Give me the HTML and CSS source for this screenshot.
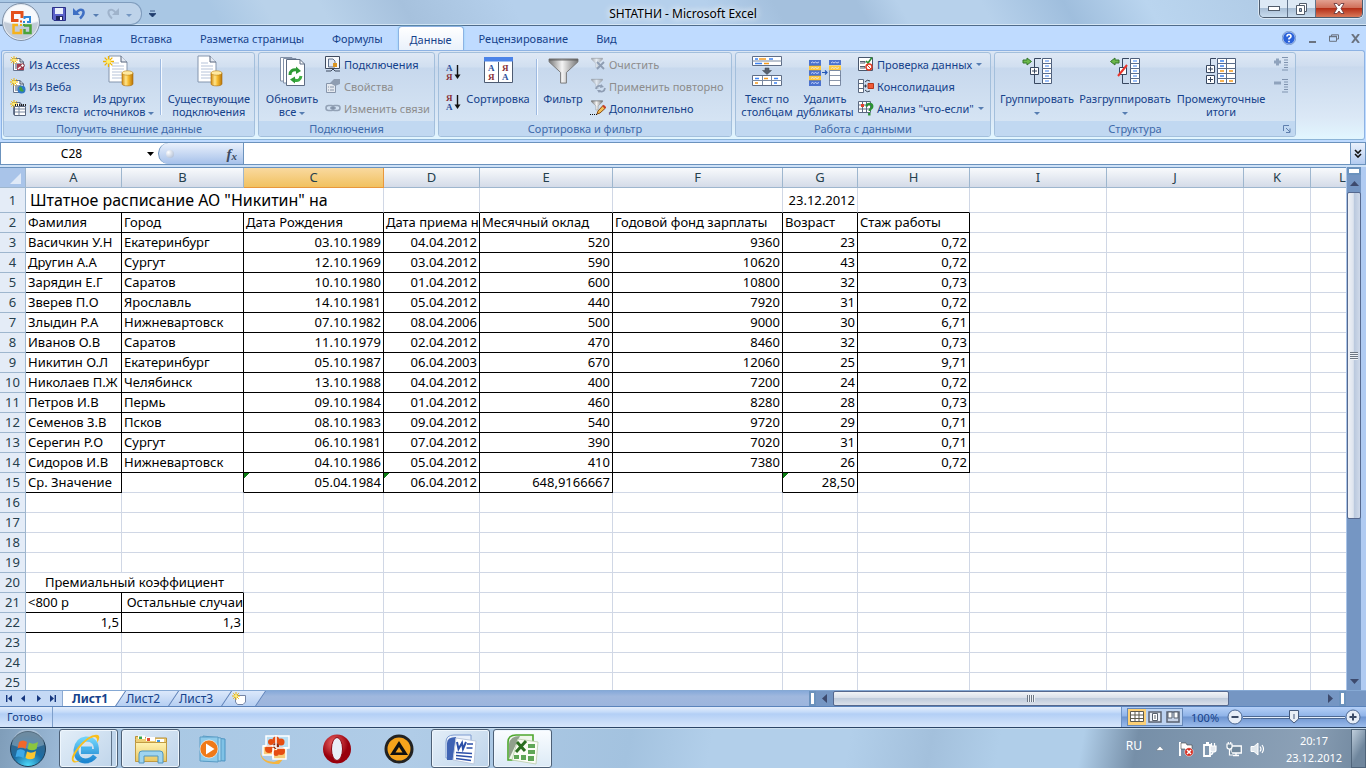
FILE: index.html
```html
<!DOCTYPE html>
<html lang="ru">
<head>
<meta charset="utf-8">
<title>SHTATНИ - Microsoft Excel</title>
<link rel="stylesheet" href="styles.css">
</head>
<body>
<svg class="defs" width="0" height="0" aria-hidden="true">
<defs>
<linearGradient id="gold"><stop offset="0" stop-color="#d28a10"/><stop offset=".35" stop-color="#ffe58a"/><stop offset=".6" stop-color="#f5b92e"/><stop offset="1" stop-color="#b87408"/></linearGradient>
<linearGradient id="metal"><stop offset="0" stop-color="#777"/><stop offset=".45" stop-color="#f4f4f4"/><stop offset="1" stop-color="#777"/></linearGradient>
<radialGradient id="orb" cx=".5" cy="1" r=".9"><stop offset="0" stop-color="#4fe0ff"/><stop offset=".5" stop-color="#1b6da5"/><stop offset="1" stop-color="#3c6482"/></radialGradient>
<radialGradient id="red" cx=".4" cy=".3"><stop offset="0" stop-color="#f26a6a"/><stop offset="1" stop-color="#99000c"/></radialGradient>
<linearGradient id="ie" x2="0" y2="1"><stop offset="0" stop-color="#6fd3fa"/><stop offset="1" stop-color="#1d86d0"/></linearGradient>
<linearGradient id="folder" x2="0" y2="1"><stop offset="0" stop-color="#fff3b4"/><stop offset="1" stop-color="#e9c761"/></linearGradient>
<symbol id="star" viewBox="0 0 10 10"><path d="M5 0V10M0 5H10M1.5 1.5L8.5 8.5M8.5 1.5L1.5 8.5" stroke="#f0b400" stroke-width="1.2"/><circle cx="5" cy="5" r="2" fill="#ffee70"/></symbol>
<symbol id="sheet" viewBox="0 0 26 32"><path d="M1 1H13L19 7V27H1Z" fill="#fff" stroke="#8495ad"/><path d="M13 1V7H19" fill="#e4eaf3" stroke="#56647d"/><path d="M4 8H11M4 11H16M4 14H16M4 17H14M4 20H14M4 23H14" stroke="#b6c3d9"/><path d="M14 18V29C14 31.500 25 31.500 25 29V18Z" fill="url(#gold)" stroke="#a96d10" stroke-width=".6"/><ellipse cx="19.500" cy="18" rx="5.500" ry="2.200" fill="#ffe9a0" stroke="#bb8213" stroke-width=".6"/></symbol>
<symbol id="page" viewBox="0 0 16 16"><path d="M3.500 2.500H10L13.500 6V14.500H3.500Z" fill="#fff" stroke="#66758f"/><path d="M10 2.500V6H13.500M5 8H11M5 10H11M5 12H9" fill="none" stroke="#3c4b63"/><use href="#star" x="0" y="0" width="8" height="8"/></symbol>
<symbol id="funnel" viewBox="0 0 32 28"><path d="M1 1H31V4L19 15V26H13V15L1 4Z" fill="url(#metal)" stroke="#777"/><path d="M1 2H31" stroke="#555"/></symbol>
<symbol id="rows" viewBox="0 0 10 26"><path d="M.5.500H9.500V25.500H.5Z" fill="#fff" stroke="#4e5f7b"/><path d="M0 5.500H10M0 10.500H10M0 15.500H10M0 20.500H10" stroke="#5b6d8b"/><path d="M3 3H7M3 8H7M3 13H7M3 18H7M3 23H7" stroke="#3e83f1" stroke-width="1.200"/></symbol>
<symbol id="arrow" viewBox="0 0 10 8"><path d="M1 2.500H5V.5L9.500 4L5 7.500V5.500H1Z" fill="#6bb84a" stroke="#34762a"/></symbol>
</defs>
</svg>

<header class="titlebar">
  <div class="qat">
    <button aria-label="Сохранить"><svg width="14" height="14"><path d="M.5.500H13.500V13.500H2L.5 12Z" fill="#5b62c9" stroke="#2b3187"/><path d="M3 1H11V7H3Z" fill="#e9effb"/><path d="M4 9H11V13H4Z" fill="#20275c"/><path d="M8 10H10V13H8Z" fill="#fff"/></svg></button>
    <button aria-label="Отменить"><svg width="13" height="13"><path d="M3 6Q7 1 10 3.500Q12 7 7 11.500" fill="none" stroke="#3e6fc4" stroke-width="2.500"/><path d="M0 1V8H7Z" fill="#3e6fc4"/></svg></button>
    <button aria-label="Список отмены"><i class="caret"></i></button>
    <button class="dim" aria-label="Вернуть"><svg width="13" height="13"><path d="M10 6Q6 1 3 3.500Q1 7 6 11.500" fill="none" stroke="#93a6bf" stroke-width="2"/><path d="M13 1V8H6Z" fill="#93a6bf"/></svg></button>
    <button class="dim" aria-label="Список возврата"><i class="caret"></i></button>
  </div>
  <button class="customize" aria-label="Настройка панели"><svg width="7" height="8"><path d="M1 1H6M0 3.500H7L3.500 7Z" fill="#1f3c6c" stroke="#1f3c6c" stroke-width=".8"/></svg></button>
  <h1>SHTATНИ - Microsoft Excel</h1>
  <div class="winbtns">
    <button aria-label="Свернуть"><svg width="12" height="5"><rect x=".5" y=".5" width="11" height="4" fill="#fff" stroke="#515c6b"/></svg></button>
    <button aria-label="Развернуть"><svg width="13" height="12"><path d="M4.500.500H11.500V8.500H4.500Z" fill="#fff" stroke="#515c6b"/><path d="M1.500 2.500H9.500V11.500H1.500Z" fill="#fff" stroke="#515c6b"/><path d="M4.500 5.500H6.500V8.500H4.500Z" fill="#9fb3cb" stroke="#515c6b"/></svg></button>
    <button class="close" aria-label="Закрыть"><svg width="12" height="11"><path d="M1 .5H4L6 3L8 .5H11L8 5.500L11 10.500H8L6 8L4 10.500H1L4 5.500Z" fill="#fff" stroke="#5e2f35" stroke-width=".8"/></svg></button>
  </div>
</header>
<button class="office" aria-label="Office"><svg width="40" height="40" viewBox="0 0 40 40"><circle cx="20" cy="20" r="18.500" fill="#e5ebf3" stroke="#7f90a6"/><path d="M3 20A17 17 0 0 0 37 20Q20 26 3 20" fill="#c3ccd8"/><path d="M3 19A17 16 0 0 1 37 19Q20 24 3 19" fill="#f7f9fc"/><g fill="none"><path d="M17.500 18.500H11.500V10.500H21V16" stroke="#e4501b" stroke-width="3"/><path d="M23.500 17V15H29V20H26" stroke="#2f87d8" stroke-width="2"/><path d="M17 23H12.500V31H20V27" stroke="#f6b21b" stroke-width="2.500"/><path d="M23 23.500H29.500V31H23.500V27" stroke="#4ba339" stroke-width="2.500"/></g><path d="M19 18.500H21V20.500H19Z" fill="#e4501b"/><path d="M22 19H24V21H22Z" fill="#2f87d8"/><path d="M19 22H21V24H19Z" fill="#f6b21b"/><path d="M22 22H24V24H22Z" fill="#4ba339"/></svg></button>

<nav class="tabs">
  <a href="#">Главная</a><a href="#">Вставка</a><a href="#">Разметка страницы</a><a href="#">Формулы</a><a href="#" class="on">Данные</a><a href="#">Рецензирование</a><a href="#">Вид</a>
  <div class="docbtns">
    <button aria-label="Справка"><svg width="14" height="14"><circle cx="7" cy="7" r="6.300" fill="#2b62d9" stroke="#c6dcfa"/><circle cx="7" cy="7" r="6.800" fill="none" stroke="#4a6aa5" stroke-width=".5"/><path d="M5 5.500Q5 3.500 7 3.500T9 5.500Q9 6.500 7 7.500V8.500M7 9.700V11.200" fill="none" stroke="#fff" stroke-width="1.600"/></svg></button>
    <button aria-label="Свернуть окно"><svg width="9" height="10"><path d="M1 9H8" stroke="#6b7380" stroke-width="2"/></svg></button>
    <button aria-label="Восстановить окно"><svg width="10" height="8"><path d="M2.500 2V.8H9.500V5H8M.5 2.500H7.500V7.300H.5Z" fill="none" stroke="#6b7380"/><path d="M0 2.500H8" stroke="#6b7380" stroke-width="1.500"/></svg></button>
    <button aria-label="Закрыть окно"><svg width="9" height="9"><path d="M1 0L8 9M8 0L1 9" stroke="#6b7380" stroke-width="2"/></svg></button>
  </div>
</nav>

<section class="ribbon">
  <div class="group g1">
    <div class="tools">
      <div class="stack">
        <button><svg width="16" height="16"><use href="#page"/><path d="M7 8H14V14H7Z" fill="#a83a4c"/><path d="M8 13L13 9" stroke="#fff" stroke-width="1.500"/><circle cx="12.500" cy="9.500" r="1.800" fill="#fff" stroke="#7c2030"/></svg>Из Access</button>
        <button><svg width="16" height="16"><use href="#page"/><circle cx="11.500" cy="11.500" r="4" fill="#2f78c8"/><path d="M9 10Q11 7 12 10T14 13Q10 15 9 10" fill="#3ea33a"/></svg>Из Веба</button>
        <button><svg width="16" height="16"><use href="#page"/><path d="M4.500 6.500H15.500V15.500H4.500Z" fill="#fff" stroke="#59677f"/><path d="M5 5H16" stroke="#222" stroke-dasharray="1 1" stroke-width="2"/><path d="M5 9H15M5 12H15M9 6V15" stroke="#7888a0"/></svg>Из текста</button>
      </div>
      <button class="big w78"><svg width="32" height="32"><use href="#sheet" x="5" y="0" width="26" height="32"/><use href="#star" x="0" y="1" width="11" height="11"/></svg><span>Из других<br>источников <i class="caret"></i></span></button>
      <hr>
      <button class="big w90"><svg width="32" height="32"><use href="#sheet" x="4" y="0" width="26" height="32"/></svg><span>Существующие<br>подключения</span></button>
    </div>
    <h2>Получить внешние данные</h2>
  </div>
  <div class="group g2">
    <div class="tools">
      <button class="big w62"><svg width="32" height="32"><path d="M4.500 2.500H16V26H4.500Z" fill="#fff" stroke="#8291a8"/><path d="M7.500 3.500H20V28H7.500Z" fill="#fff" stroke="#8291a8"/><path d="M10.500 4.500H24L28.500 9V30.500H10.500Z" fill="#fff" stroke="#5e6c83"/><path d="M24 4.500V9H28.500" fill="none" stroke="#5e6c83"/><path d="M14 20Q14 14 21 15" fill="none" stroke="#2e9b35" stroke-width="3"/><path d="M20 11.500L25 16L20 19Z" fill="#2e9b35"/><path d="M25 21Q24 27 18 25" fill="none" stroke="#3cad40" stroke-width="3"/><path d="M19 28.500L14 24.500L19 21.500Z" fill="#2e9b35"/></svg><span>Обновить<br>все <i class="caret"></i></span></button>
      <div class="stack snug">
        <button><svg width="16" height="16"><path d="M.5.500H14.500V12.500H.5Z" fill="#f7f9fc" stroke="#3e4a5e"/><path d="M3.500 3H8L10 5V11H3.500Z" fill="#dfe8f5" stroke="#5f6f89"/><path d="M8 7H12V11H8Z" fill="#d99522"/><path d="M1 15H6L8 13L10 15H15" fill="none" stroke="#3e4a5e"/></svg>Подключения</button>
        <button disabled><svg width="16" height="16"><path d="M1.500 5.500H10.500V14.500H1.500Z" fill="#e5e9ef" stroke="#8795aa"/><path d="M3 9H4M5 9H9M3 12H4M5 12H9" stroke="#8795aa"/><path d="M5 5L9 1H15V6L10 8Z" fill="#8f9db1"/></svg>Свойства</button>
        <button disabled><svg width="16" height="16"><rect x="1" y="5.500" width="8" height="5" rx="2.500" fill="none" stroke="#93a2b6" stroke-width="1.600"/><rect x="7" y="5.500" width="8" height="5" rx="2.500" fill="none" stroke="#93a2b6" stroke-width="1.600"/><path d="M5 8H11" stroke="#6f7f96"/></svg>Изменить связи</button>
      </div>
    </div>
    <h2>Подключения</h2>
  </div>
  <div class="group g3">
    <div class="tools">
      <div class="sorts">
        <button aria-label="От А до Я"><svg width="16" height="18"><text x="1" y="8" class="ltr blue">А</text><text x="1" y="17" class="ltr brown">Я</text><path d="M12.500 2V12" stroke="#111" stroke-width="1.400"/><path d="M9.500 11.500H15.500L12.500 16Z" fill="#111"/></svg></button>
        <button aria-label="От Я до А"><svg width="16" height="18"><text x="1" y="8" class="ltr brown">Я</text><text x="1" y="17" class="ltr blue">А</text><path d="M12.500 2V12" stroke="#111" stroke-width="1.400"/><path d="M9.500 11.500H15.500L12.500 16Z" fill="#111"/></svg></button>
      </div>
      <button class="big w72"><svg width="32" height="32"><path d="M2.500 2.500H30.500V27.500H2.500Z" fill="#fff" stroke="#4d5b72"/><path d="M2 2H31V6.500H2Z" fill="#4b83e8"/><path d="M16.500 7V27" stroke="#4d5b72"/><text x="6" y="16" class="ltr blue">А</text><text x="6" y="25" class="ltr brown">Я</text><text x="20" y="16" class="ltr brown">Я</text><text x="20" y="25" class="ltr blue">А</text></svg><span>Сортировка</span></button>
      <hr>
      <button class="big w46"><svg width="32" height="32"><use href="#funnel" x="1" y="3" width="31" height="27"/></svg><span>Фильтр</span></button>
      <div class="stack">
        <button disabled><svg width="16" height="16"><g opacity=".55"><use href="#funnel" x="1" y="1" width="12" height="12"/></g><path d="M7 6L14 13M14 6L7 13" stroke="#8e9db3" stroke-width="1.800"/></svg>Очистить</button>
        <button disabled><svg width="16" height="16"><g opacity=".55"><use href="#funnel" x="1" y="0" width="12" height="12"/></g><path d="M6 11Q7 7 11 8M15 10Q14 15 9 13" fill="none" stroke="#8e9db3" stroke-width="1.800"/><path d="M11 6L14 9L10 10ZM9 15L7 12L11 12Z" fill="#8e9db3"/></svg>Применить повторно</button>
        <button><svg width="16" height="16"><use href="#funnel" x="1" y="0" width="12" height="11"/><path d="M0 14.500H7" stroke="#111" stroke-dasharray="1 1"/><path d="M7 14L8 11L13 5.500L15.500 8L10 13Z" fill="#f4bd54" stroke="#8a4e12"/><path d="M13 5.500L15.500 8" stroke="#c7402b" stroke-width="2"/></svg>Дополнительно</button>
      </div>
    </div>
    <h2>Сортировка и фильтр</h2>
  </div>
  <div class="group g4">
    <div class="tools">
      <button class="big w58"><svg width="32" height="32"><path d="M1.500 1.500H30.500V10.500H1.500ZM1.500 20.500H30.500V30.500H1.500Z" fill="#fff" stroke="#5e6d86"/><path d="M1 6H31M1 25.500H31M11.500 21V30M20.500 21V30" stroke="#7988a0"/><path d="M4 4H7M18 4H22M4 8.500H11M4 23.500H8M23 23.500H27M23 28H26" stroke="#3e83f1" stroke-width="1.300"/><path d="M8 4H15M13 8.500H18M13 23.500H17M4 28H7" stroke="#f39a1f" stroke-width="1.300"/><path d="M14 13H18V15.500H20.500L16 19.500L11.500 15.500H14Z" fill="#59616d" stroke="#3f4650" stroke-width=".5"/></svg><span>Текст по<br>столбцам</span></button>
      <button class="big w58"><svg width="34" height="32"><path d="M1 5H13V31H1ZM21 5H33V10H21Z" fill="#4c72cf"/><path d="M1 10.500H13V15.500H1ZM1 20.500H13V25.500H1ZM21 10.500H33V15.500H21Z" fill="#ffc83d"/><path d="M21.500 15.500H32.500V30.500H21.500Z" fill="#fff" stroke="#7b8aa3"/><path d="M21 20.500H33M21 25.500H33M1 10.500H13M1 15.500H13M1 20.500H13M1 25.500H13" stroke="#6d7c96" stroke-width=".8"/><path d="M3 8L4.500 7L6 8L7.500 7L9 8L11 7M3 13.500L4.500 12.500L6 13.500L7.500 12.500L9 13.500L11 12.500M3 18.500L4.500 17.500L6 18.500L7.500 17.500L9 18.500L11 17.500M3 23.500L4.500 22.500L6 23.500L7.500 22.500L9 23.500L11 22.500M3 28.500L4.500 27.500L6 28.500L7.500 27.500L9 28.500L11 27.500M23 8L24.500 7L26 8L27.500 7L29 8L31 7M23 13.500L24.500 12.500L26 13.500L27.500 12.500L29 13.500L31 12.500" fill="none" stroke="#e4ecff" stroke-width=".8"/><path d="M14 17.500H19M17 15.500L19 17.500L17 19.500" fill="none" stroke="#2458b8" stroke-width="1.200"/></svg><span>Удалить<br>дубликаты</span></button>
      <div class="stack">
        <button><svg width="16" height="16"><path d="M.5 1.500H14.500V14.500H.5Z" fill="#fff" stroke="#48566c"/><path d="M2 5.500H7V7H2M2 10.500H7V12H2" fill="none" stroke="#555f70"/><path d="M8 5L10 7L14 1.500" fill="none" stroke="#2c8d33" stroke-width="1.600"/><circle cx="11" cy="11" r="3" fill="#fff" stroke="#dd3b24" stroke-width="1.400"/><path d="M9 9L13 13" stroke="#dd3b24"/></svg>Проверка данных<i class="caret"></i></button>
        <button><svg width="16" height="16"><path d="M.5 1.500H5.500V14.500H.5ZM.5 5.500H5.500M.5 10.500H5.500" fill="#fff" stroke="#5b6980"/><path d="M7 4Q9 1 12 3M7 12Q9 15 12 13M6 8H9M7.500 6.500V9.500" fill="none" stroke="#333e50"/><path d="M10 5.500H15.500V10.500H10Z" fill="#ef5a36" stroke="#b4381c"/></svg>Консолидация</button>
        <button><svg width="16" height="16"><path d="M.5 1.500H12.500V12.500H.5Z" fill="#fff" stroke="#5b6980"/><path d="M.5 5H12.500M.5 9H12.500M4.500 1.500V12.500M8.500 1.500V12.500" stroke="#5b6980"/><path d="M3 4H6V7H3Z" fill="#e3402c"/><path d="M8.500 6.500Q9 3.500 12 4T14 7.500Q12 9 11.500 11M11.300 13V15.500" fill="none" stroke="#2a9132" stroke-width="2.400"/></svg>Анализ "что-если"<i class="caret"></i></button>
      </div>
    </div>
    <h2>Работа с данными</h2>
  </div>
  <div class="group g5">
    <div class="tools">
      <button class="big w80"><svg width="32" height="32"><use href="#rows" x="21" y="3" width="10" height="26"/><path d="M20 3.500H13.500V28.500H20" fill="none" stroke="#37465f"/><path d="M9.500 12.500H17.500V19.500H9.500Z" fill="#fff" stroke="#37465f"/><path d="M11 16H16M13.500 13.500V18.500" stroke="#37465f"/><use href="#arrow" x="1" y="2" width="10" height="9"/></svg><span>Группировать<br><i class="caret"></i></span></button>
      <button class="big w96"><svg width="32" height="32"><use href="#rows" x="21" y="3" width="10" height="26"/><path d="M20 3.500H13.500V28.500H20" fill="none" stroke="#37465f"/><path d="M10.500 12.500H17.500V19.500H10.500Z" fill="#fff" stroke="#37465f"/><path d="M9 21L18 10" stroke="#e8342b" stroke-width="2"/><g transform="translate(12 0) scale(-1 1)"><use href="#arrow" x="1" y="2" width="10" height="9"/></g></svg><span>Разгруппировать<br><i class="caret"></i></span></button>
      <button class="big w96"><svg width="32" height="32"><path d="M12.500 3.500H30.500V28.500H12.500Z" fill="#fff" stroke="#4e5f7b"/><path d="M21.500 4V28M12 8.500H31M12 13.500H31M12 18.500H31M12 23.500H31" stroke="#5b6d8b"/><path d="M15 6H19M15 11H19M15 21H19" stroke="#3e83f1" stroke-width="1.300"/><path d="M15 16H19M15 26H19M24 16H28M24 26H28" stroke="#f39a1f" stroke-width="1.300"/><path d="M11 3.500H5.500V10" fill="none" stroke="#37465f"/><path d="M1.500 10.500H9.500V17.500H1.500ZM1.500 20.500H9.500V28.500H1.500Z" fill="#fff" stroke="#37465f"/><path d="M3 14H8M5.500 11.500V16.500M3 24.500H8M5.500 22V27" stroke="#37465f"/></svg><span>Промежуточные<br>итоги</span></button>
      <div class="outline">
        <button disabled aria-label="Показать детали"><svg width="16" height="16"><path d="M1 6H8M4.500 2.500V9.500" stroke="#8fa3bd" stroke-width="3"/><path d="M9 1.500H15M11 4H15M11 6.500H15M11 9H15M11 11.500H15M9 14H15" stroke="#7f93af"/></svg></button>
        <button disabled aria-label="Скрыть детали"><svg width="16" height="16"><path d="M1 5H8" stroke="#8fa3bd" stroke-width="3"/><path d="M9 1.500H15M11 4H15M11 6.500H15M11 9H15M11 11.500H15M9 14H15" stroke="#7f93af"/></svg></button>
      </div>
    </div>
    <h2 class="wide">Структура<button class="launch" aria-label="Параметры структуры"><svg width="8" height="8"><path d="M.5 6V.5H6M3 3L7 7M7 3.500V7.500H3" fill="none" stroke="#5f7fae"/></svg></button></h2>
  </div>
</section>

<div class="formula">
  <input class="namebox" aria-label="Имя" value="C28">
  <button class="drop" aria-label="Список имён"><svg width="7" height="4"><path d="M0 0H7L3.500 4Z"/></svg></button>
  <div class="fx"><i class="dot"></i><button aria-label="Вставить функцию"><i>f</i><sub>x</sub></button></div>
  <input class="expr" aria-label="Строка формул">
  <button class="expand" aria-label="Развернуть строку формул"><svg width="8" height="9"><path d="M1 1L4 4L7 1M1 5L4 8L7 5" fill="none" stroke="#111" stroke-width="1.600"/></svg></button>
</div>

<main class="book">
<div class="grid">
<table>
<colgroup><col class="c0"><col class="ca"><col class="cb"><col class="cc"><col class="cd"><col class="ce"><col class="cf"><col class="cg"><col class="ch"><col class="ci"><col class="cj"><col class="ck"><col class="cl"></colgroup>
<thead><tr><th class="corner"><svg width="12" height="12"><path d="M11 0V11H0Z" fill="#dfe9f7"/></svg></th><th>A<th>B<th class="sel">C<th>D<th>E<th>F<th>G<th>H<th>I<th>J<th>K<th>L</tr></thead>
<tbody>
<tr class="r1"><th>1<td colspan="3" class="u title">Штатное расписание АО "Никитин" на<td class="u"><td class="u"><td class="u"><td class="u n">23.12.2012<td class="u"><td><td><td><td></tr>
<tr class="box txt"><th>2<td>Фамилия<td>Город<td>Дата Рождения<td>Дата приема н<td>Месячный оклад<td>Годовой фонд зарплаты<td>Возраст<td>Стаж работы<td><td><td><td></tr>
<tr class="box"><th>3<td>Васичкин У.Н<td>Екатеринбург<td>03.10.1989<td>04.04.2012<td>520<td>9360<td>23<td>0,72<td><td><td><td></tr>
<tr class="box"><th>4<td>Другин А.А<td>Сургут<td>12.10.1969<td>03.04.2012<td>590<td>10620<td>43<td>0,72<td><td><td><td></tr>
<tr class="box"><th>5<td>Зарядин Е.Г<td>Саратов<td>10.10.1980<td>01.04.2012<td>600<td>10800<td>32<td>0,73<td><td><td><td></tr>
<tr class="box"><th>6<td>Зверев П.О<td>Ярославль<td>14.10.1981<td>05.04.2012<td>440<td>7920<td>31<td>0,72<td><td><td><td></tr>
<tr class="box"><th>7<td>Злыдин Р.А<td>Нижневартовск<td>07.10.1982<td>08.04.2006<td>500<td>9000<td>30<td>6,71<td><td><td><td></tr>
<tr class="box"><th>8<td>Иванов О.В<td>Саратов<td>11.10.1979<td>02.04.2012<td>470<td>8460<td>32<td>0,73<td><td><td><td></tr>
<tr class="box"><th>9<td>Никитин О.Л<td>Екатеринбург<td>05.10.1987<td>06.04.2003<td>670<td>12060<td>25<td>9,71<td><td><td><td></tr>
<tr class="box"><th>10<td>Николаев П.Ж<td>Челябинск<td>13.10.1988<td>04.04.2012<td>400<td>7200<td>24<td>0,72<td><td><td><td></tr>
<tr class="box"><th>11<td>Петров И.В<td>Пермь<td>09.10.1984<td>01.04.2012<td>460<td>8280<td>28<td>0,73<td><td><td><td></tr>
<tr class="box"><th>12<td>Семенов З.В<td>Псков<td>08.10.1983<td>09.04.2012<td>540<td>9720<td>29<td>0,71<td><td><td><td></tr>
<tr class="box"><th>13<td>Серегин Р.О<td>Сургут<td>06.10.1981<td>07.04.2012<td>390<td>7020<td>31<td>0,71<td><td><td><td></tr>
<tr class="box"><th>14<td>Сидоров И.В<td>Нижневартовск<td>04.10.1986<td>05.04.2012<td>410<td>7380<td>26<td>0,72<td><td><td><td></tr>
<tr><th>15<td class="u r">Ср. Значение<td class="r"><td class="u r n flag">05.04.1984<td class="u r n flag">06.04.2012<td class="u r n">648,9166667<td class="r"><td class="u r n flag">28,50<td><td><td><td><td></tr>
<tr><th>16<td><td><td><td><td><td><td><td><td><td><td><td></tr>
<tr><th>17<td><td><td><td><td><td><td><td><td><td><td><td></tr>
<tr><th>18<td><td><td><td><td><td><td><td><td><td><td><td></tr>
<tr><th>19<td><td><td><td><td><td><td><td><td><td><td><td></tr>
<tr><th>20<td colspan="2" class="u mid">Премиальный коэффициент<td><td><td><td><td><td><td><td><td><td></tr>
<tr><th>21<td class="u r">&lt;800 р<td class="u r n tight">Остальные случаи<td><td><td><td><td><td><td><td><td><td></tr>
<tr><th>22<td class="u r n">1,5<td class="u r n">1,3<td><td><td><td><td><td><td><td><td><td></tr>
<tr><th>23<td><td><td><td><td><td><td><td><td><td><td><td></tr>
<tr><th>24<td><td><td><td><td><td><td><td><td><td><td><td></tr>
<tr><th>25<td><td><td><td><td><td><td><td><td><td><td><td></tr>
</tbody>
</table>
</div>
<div class="vscroll">
  <i class="split"></i>
  <button aria-label="Вверх"><svg width="9" height="5"><path d="M0 5H9L4.500 0Z" fill="#3d4a6d"/></svg></button>
  <div class="track"><div class="thumb"><i></i></div></div>
  <button aria-label="Вниз"><svg width="9" height="5"><path d="M0 0H9L4.500 5Z" fill="#3d4a6d"/></svg></button>
</div>
</main>

<div class="sheets">
  <div class="navs">
    <button aria-label="Первый лист"><svg width="7" height="7"><path d="M.7 0V7" stroke="#16367e" stroke-width="1.400"/><path d="M6 0V7L2 3.500Z" fill="#16367e"/></svg></button>
    <button aria-label="Предыдущий лист"><svg width="7" height="7"><path d="M5 0V7L1 3.500Z" fill="#16367e"/></svg></button>
    <button aria-label="Следующий лист"><svg width="7" height="7"><path d="M2 0V7L6 3.500Z" fill="#16367e"/></svg></button>
    <button aria-label="Последний лист"><svg width="7" height="7"><path d="M6.300 0V7" stroke="#16367e" stroke-width="1.400"/><path d="M1 0V7L5 3.500Z" fill="#16367e"/></svg></button>
  </div>
  <div class="leafs">
    <a href="#" class="leaf on"><span>Лист1</span></a><a href="#" class="leaf"><span>Лист2</span></a><a href="#" class="leaf"><span>Лист3</span></a><a href="#" class="leaf add" aria-label="Вставить лист"><span><svg width="15" height="13"><path d="M3.500 3.500H13.500V10L11 12.500H5.500L3.500 10Z" fill="#fff" stroke="#7585a6"/><use href="#star" x="0" y="0" width="8" height="8"/></svg></span></a>
  </div>
  <div class="hscroll">
    <i class="split"></i>
    <button aria-label="Влево"><svg width="5" height="9"><path d="M5 0V9L0 4.500Z" fill="#3d4a6d"/></svg></button>
    <div class="track"><div class="thumb"><i></i></div></div>
    <button aria-label="Вправо"><svg width="5" height="9"><path d="M0 0V9L5 4.500Z" fill="#3d4a6d"/></svg></button>
    <i class="split"></i>
  </div>
</div>

<footer class="status">
  <span class="ready">Готово</span>
  <div class="zoom">
    <div class="views">
      <button class="on" aria-label="Обычный"><svg width="14" height="12"><path d="M.5.500H13.500V10.500H.5ZM.5 4H13.500M.5 7.500H13.500M5 .5V10.500M9 .5V10.500" fill="#fff" stroke="#5d5a4d"/></svg></button>
      <button aria-label="Разметка"><svg width="14" height="12"><path d="M1 1H13V11H1Z" fill="#e9eef6" stroke="#596270" stroke-width="1.500"/><path d="M4.500 2.500H9.500V9.500H4.500Z" fill="#fff" stroke="#596270"/><path d="M6 5H8M6 7H8" stroke="#596270"/></svg></button>
      <button aria-label="Страничный"><svg width="14" height="12"><path d="M1 1H13V11H1Z" fill="#c7d3e6" stroke="#596270" stroke-width="1.500"/><path d="M2 1H6V7H2ZM8 1H12V7H8Z" fill="#fff" stroke="#596270"/></svg></button>
    </div>
    <span>100%</span>
    <button class="round" aria-label="Уменьшить"><svg width="16" height="16"><circle cx="8" cy="8" r="7" fill="#e6edf7" stroke="#4c6893"/><path d="M4.500 8H11.500" stroke="#3a4a66" stroke-width="2"/></svg></button>
    <div class="slider"><svg width="10" height="14"><path d="M.5.500H9.500V9L5 13L.5 9Z" fill="#e9eef6" stroke="#44597d"/><path d="M5 4V9" stroke="#44597d"/></svg></div>
    <button class="round" aria-label="Увеличить"><svg width="16" height="16"><circle cx="8" cy="8" r="7" fill="#e6edf7" stroke="#4c6893"/><path d="M4.500 8H11.500M8 4.500V11.500" stroke="#3a4a66" stroke-width="2"/></svg></button>
  </div>
</footer>

<nav class="taskbar">
  <button class="start" aria-label="Пуск"><svg width="38" height="38" viewBox="0 0 38 38"><circle cx="19" cy="19" r="17.500" fill="url(#orb)" stroke="#1d3c55"/><path d="M3 15A16 16 0 0 1 35 15Q19 22 3 15" fill="#fff" opacity=".25"/><path d="M10 12Q14 9 18 12L16.500 19Q13 16.500 8.500 18.500Z" fill="#f0682b"/><path d="M20 12.500Q24 15 29 12L27.500 19Q23 21.500 18.500 19Z" fill="#8cc63f"/><path d="M8 20.500Q12 18 16 21L14.500 28Q11 25.500 6.500 27Z" fill="#3fa9e8"/><path d="M18 21.500Q22 24 27 21L25.500 28Q21 30.500 16.500 28Z" fill="#fdc62f"/></svg></button>
  <button class="app open stacked" aria-label="Internet Explorer"><svg width="32" height="32"><path d="M25 23Q21 28 15 28Q6 27 6 17Q7 7 16 6Q27 6 26.500 18.500H11" fill="none" stroke="url(#ie)" stroke-width="5"/><path d="M11 15H22" stroke="#45b4ee" stroke-width="3"/><path d="M3 29Q-1 25 8 14Q20 0 28 2Q31 4 27 10Q28 4 24 4Q16 6 8 17Q1 27 5 28Q8 29 12 26Q6 31 3 29" fill="#f9bf1c"/></svg></button>
  <button class="app open" aria-label="Проводник"><svg width="34" height="32"><path d="M1.500 6.500V3.500H10L12 5H32.500V28H1.500Z" fill="#efcf75" stroke="#b99139"/><path d="M4 2.500H11V6H4Z" fill="#fff"/><path d="M5 3.500H8V6H5Z" fill="#36a552"/><path d="M12 4H21V8H12Z" fill="#fff"/><path d="M13 5H16V8H13Z" fill="#e34c34"/><path d="M22 6H30V10H22Z" fill="#fff"/><path d="M23 7H26V10H23Z" fill="#4099df"/><path d="M1.500 9.500H32.500V28.500H1.500Z" fill="url(#folder)" stroke="#c19b43"/><path d="M5 30V21Q5 18 8 18H26Q29 18 29 21V30H24V23H10V30Z" fill="#9fd4ef" stroke="#5196be"/></svg></button>
  <button class="app" aria-label="Проигрыватель"><svg width="32" height="32"><path d="M9 4L28 6V28L9 27Z" fill="#7fc2e6" stroke="#4b94c3"/><path d="M6 3L24 5V28L6 28Z" fill="#a5d8f1" stroke="#5a9cc5"/><path d="M3 4L21 4V29L3 28Z" fill="#8fcbea" stroke="#5a9cc5"/><circle cx="12" cy="16" r="9" fill="#f07a18" stroke="#fff" stroke-width=".6"/><path d="M9 10.500L17.500 16L9 21.500Z" fill="#fff"/></svg></button>
  <button class="app" aria-label="Фото"><svg width="32" height="32"><path d="M2 14Q-1 28 15 29L25 25L20 31Q-2 32 2 14" fill="#f5b540"/><path d="M7 3H30V15H7Z" fill="#b9dff4" stroke="#fff" stroke-width="1.500"/><path d="M4 13H17V22H4ZM14 15H27V26H14Z" fill="#f7cd7a" stroke="#fff" stroke-width="1.500"/><g fill="#e64d12"><circle cx="17" cy="7" r="3.500"/><circle cx="12" cy="9" r="3"/><circle cx="22" cy="9" r="3.500"/><circle cx="10" cy="16" r="4"/><circle cx="22" cy="18" r="4"/><circle cx="17" cy="20" r="3"/></g><circle cx="17" cy="13" r="3" fill="#8e260b"/><path d="M17 2V15M4 13H17M17 15H29M14 15V25" stroke="#fff" stroke-width="1.500"/></svg></button>
  <button class="app" aria-label="Opera"><svg width="32" height="32"><ellipse cx="16" cy="16" rx="14" ry="14.500" fill="url(#red)"/><ellipse cx="16" cy="16" rx="5.500" ry="11.500" fill="#e9eff7" stroke="#8d0711"/></svg></button>
  <button class="app" aria-label="AIMP"><svg width="32" height="32"><circle cx="16" cy="16" r="14.500" fill="#222"/><circle cx="16" cy="16" r="11.500" fill="#f6a31c"/><path d="M16 8L25 22H7Z" fill="#111"/><path d="M16 14L19.500 19.500H12.500Z" fill="#f6a31c"/></svg></button>
  <button class="app open" aria-label="Word"><svg width="34" height="32"><path d="M2 9Q2 2 10 2H27V25H2Z" fill="#eaf1fb" stroke="#7d9bd0"/><path d="M3 27V10Q3 4 12 4L9 27Z" fill="#3f63b3"/><path d="M12 5L32 8L30 31L9 27Z" fill="#fff" stroke="#bbc8dd"/><path d="M13 9L14.500 16L18 10L19 16L22 9" fill="none" stroke="#2b4fa8" stroke-width="2"/><path d="M23 11H29M22.500 15H28.500M12 19.500L28 20.500M12 22.500L28 24M12 25.500L27 27.500" stroke="#2b4fa8" stroke-width="1.600"/></svg></button>
  <button class="app open active" aria-label="Excel"><svg width="34" height="32"><path d="M2 9Q2 2 10 2H27V27H2Z" fill="#eef6ea" stroke="#4ea72e" stroke-width="1.600"/><path d="M3 26V11Q4 3 14 3Z" fill="#90a08c"/><path d="M12 6L32 9L30 31L6 27Z" fill="#fafcf5" stroke="#c4d4b8"/><path d="M11 9L19 18M20 8L10 19" stroke="#2b6d20" stroke-width="3"/><path d="M22 11H29V15H22ZM22 17H29V21H22ZM8 22H13V26H8ZM15 22H20V27H15ZM22 23H28V28H22Z" fill="#5fa657"/></svg></button>
  <div class="tray">
    <span class="lang">RU</span>
    <button aria-label="Скрытые значки"><svg width="8" height="5"><path d="M0 4.500H8L4 0Z" fill="#fff" stroke="#526477" stroke-width=".5"/></svg></button>
    <div class="icons">
    <button aria-label="Центр поддержки"><svg width="16" height="16"><path d="M2 1V15" stroke="#fff" stroke-width="2"/><path d="M3 2H8L9 4H14V9H8L7 8H3Z" fill="#fff" stroke="#444" stroke-width=".6"/><circle cx="11" cy="11" r="4.300" fill="#d52b1e" stroke="#fff" stroke-width=".5"/><path d="M9 9L13 13M13 9L9 13" stroke="#fff" stroke-width="1.500"/></svg></button>
    <button aria-label="Питание"><svg width="16" height="16"><path d="M2 4H8V15H2ZM4 2H7" fill="none" stroke="#fff" stroke-width="1.800"/><path d="M8 5H14V9Q14 11 11 11T8 9ZM9.500 2V5M12.500 2V5M11 11Q11 14 7 14" fill="#e4e9ef" stroke="#fff" stroke-width="1.200"/></svg></button>
    <button aria-label="Сеть"><svg width="16" height="16"><path d="M5 5H15.300V12H5ZM7 14.500H13M10 12V14" fill="#71889c" stroke="#fff" stroke-width="1.300"/><path d="M1 3H6V6Q6 8 3.500 8T1 6ZM2.300 1V3M4.700 1V3M3.500 8V14H7" fill="#71889c" stroke="#fff" stroke-width="1.200"/></svg></button>
    <button aria-label="Громкость"><svg width="16" height="16"><path d="M1 5.500H4L8 2V14L4 10.500H1Z" fill="#dfe6ec" stroke="#fff"/><path d="M10 5.500Q12 8 10 10.500M12 4Q15 8 12 12" fill="none" stroke="#fff" stroke-width="1.200"/></svg></button>
    </div>
    <time>20:17<br>23.12.2012</time>
  </div>
  <button class="desktop" aria-label="Показать рабочий стол"></button>
</nav>
</body>
</html>
```

FILE: styles.css
```css
* { box-sizing: border-box; }
body {
  margin: 0;
  height: 100vh;
  display: flex;
  flex-direction: column;
  overflow: hidden;
  position: relative;
  background: #bfdbff;
  font: 11px "Noto Sans", sans-serif;
  color: #15428b;
}
button, input { font: inherit; color: inherit; border: 0; background: none; padding: 0; margin: 0; }
svg { display: block; flex: none; }
h1, h2 { margin: 0; font: inherit; }
a { color: inherit; text-decoration: none; }
.defs { position: absolute; }
.caret { display: inline-block; border: 3px solid transparent; border-top-color: #567db1; border-bottom: 0; vertical-align: middle; }

/* title bar */
.titlebar {
  flex: none;
  height: 26px;
  display: grid;
  grid-template-columns: 142px 1fr auto 1fr 142px;
  border-bottom: 1px solid #4f6b8a;
  box-shadow: inset 0 -1px #d5e6f5;
  background: linear-gradient(60deg, #a9c7e4 0 16%, #b9d2ea 20% 24%, #a6c1dd 30%, #b5d0ec 38% 52%, #a4c0dd 57% 63%, #b7d1eb 66% 72%, #9fbedd 78%, #bad5ef 84%, #a8c3df);
}
.qat {
  display: flex;
  align-items: center;
  gap: 7px;
  margin: 2px 0;
  padding-left: 52px;
  border: 1px solid #7f9cbd;
  border-left: 0;
  border-radius: 0 11px 11px 0;
  background: #bed3ea;
}
.qat .dim { opacity: .7; }
.customize { justify-self: start; padding-left: 7px; }
.titlebar h1 { font-size: 12px; line-height: 27px; color: #000; text-shadow: 0 0 6px #fff, 0 0 8px #fff; }
.winbtns {
  display: flex;
  grid-column: 4 / -1;
  justify-self: end;
  height: 18px;
  margin-right: 3px;
  border: 1px solid #4c5b6d;
  border-top: 0;
  border-radius: 0 0 5px 5px;
  overflow: hidden;
  box-shadow: 0 0 0 1px #dbe8f5;
}
.winbtns button { width: 28px; display: grid; place-items: center; background: linear-gradient(#dde9f5 50%, #a9bfd6 50%, #c9dcee); border-right: 1px solid #62748b; }
.winbtns .close { width: 46px; border: 0; background: linear-gradient(#e2a091, #cf6b55 50%, #b52f18 50%, #d9795a); }
.office { position: absolute; left: 1px; top: 2px; z-index: 2; }

/* ribbon tabs */
.tabs { flex: none; height: 24px; display: flex; padding-left: 45px; }
.tabs a { height: 24px; line-height: 25px; padding: 0 14px; }
.tabs a.on { background: linear-gradient(#fff, #e9f1fb); border: 1px solid #8db2e3; border-bottom: 0; border-radius: 4px 4px 0 0; padding: 0 11px; margin: 0 1px; box-shadow: 0 0 2px #7fd6f5; }
.docbtns { display: flex; align-items: center; gap: 12px; margin-left: auto; padding-right: 6px; }

/* ribbon */
.ribbon {
  flex: none;
  display: flex;
  gap: 3px;
  height: 90px;
  margin: 0 1px;
  padding: 1px 1px 2px;
  border: 1px solid #8db2e3;
  border-bottom-color: #8cb4d8;
  border-radius: 3px;
  background: linear-gradient(#dbe6f4, #cfddef 17%, #c9d9ed 18%, #dbe8f6 75%, #e2f6ff);
}
.group {
  display: flex;
  flex-direction: column;
  border: 1px solid #a3bfdc;
  border-radius: 3px;
  background: linear-gradient(#dee8f5, #d1dff0 17%, #c7d8ed 18%, #d9e7f5);
  overflow: hidden;
}
.g1 { width: 252px; }
.g2 { width: 177px; }
.g3 { width: 294px; }
.g4 { width: 256px; }
.g5 { width: 302px; }
.group h2 { position: relative; line-height: 15px; text-align: center; background: #c1d8f1; color: #3e6aaa; white-space: nowrap; }
.group .wide { padding-right: 20px; }
.launch { position: absolute; right: 4px; top: 4px; }
.tools { flex: 1; display: flex; padding: 0 2px; }
.tools hr { width: 2px; height: 56px; margin: 6px 2px; border: 0; border-left: 1px solid #9ebae1; border-right: 1px solid #f4f9ff; }
.stack { display: flex; flex-direction: column; padding-left: 4px; }
.stack.snug { padding-left: 2px; }
.stack button { display: flex; align-items: center; gap: 3px; height: 22px; white-space: nowrap; text-align: left; }
.stack .caret { margin-left: 1px; }
.stack button:disabled { color: #8d8d8d; }
.big { flex: none; display: flex; flex-direction: column; align-items: center; gap: 5px; line-height: 13px; padding-top: 2px; white-space: nowrap; }
.w46 { width: 46px; }
.w58 { width: 58px; }
.w62 { width: 62px; }
.w72 { width: 72px; }
.w78 { width: 78px; }
.w80 { width: 80px; }
.w90 { width: 90px; }
.w96 { width: 96px; }
.sorts { display: flex; flex-direction: column; gap: 12px; padding: 10px 1px 0 4px; }
.ltr { font: bold 9px "Liberation Serif", serif; }
.blue { fill: #294f9c; }
.brown { fill: #8a3038; }
.outline { display: flex; flex-direction: column; gap: 6px; padding: 3px 0 0 4px; }

/* formula bar */
.formula { flex: none; display: flex; height: 23px; margin-top: 2px; border-top: 1px solid #6b92bd; border-bottom: 1px solid #6b92bd; background: #fff; }
.namebox { width: 142px; text-align: center; color: #000; font-size: 12px; border-left: 1px solid #6b92bd; }
.drop { width: 16px; display: grid; place-items: center; }
.fx { width: 86px; display: flex; align-items: center; justify-content: space-between; padding: 0 6px 0 7px; border: solid #6b92bd; border-width: 0 1px; border-radius: 12px 0 0 12px; background: linear-gradient(#eaf1fc, #a6c1ea); }
.fx button { font: bold 15px/18px "Liberation Serif", serif; color: #3d4a60; }
.fx sub { font-size: 11px; font-style: italic; line-height: 1px; vertical-align: -1px; }
.dot { width: 8px; height: 8px; border-radius: 50%; background: radial-gradient(circle at 30% 30%, #fff, #a2b2cc); }
.expr { flex: 1; min-width: 0; }
.expand { width: 16px; display: grid; place-items: center; border: 1px solid #6b92bd; border-width: 0 1px; background: linear-gradient(#eaf1fc, #b3cbf0); }

/* worksheet */
.book { flex: 1; min-height: 0; display: flex; border-top: 2px solid #cfe2f7; background: #b0cbf2; }
.grid { flex: 1; min-width: 0; overflow: hidden; background: #fff; border-top: 1px solid #6b92bd; }
table { table-layout: fixed; width: 1375px; border-collapse: separate; border-spacing: 0; font-size: 13px; color: #000; }
.c0 { width: 26px; }
.ca { width: 96px; }
.cb { width: 122px; }
.cc { width: 140px; }
.cd { width: 96px; }
.ce { width: 133px; }
.cf { width: 170px; }
.cg { width: 75px; }
.ch { width: 112px; }
.ci, .cj { width: 137px; }
.ck { width: 67px; }
.cl { width: 64px; }
th { font-weight: normal; color: #26404d; padding: 0; border: solid #9eb6ce; border-width: 0 1px 1px 0; line-height: 19px; height: 20px; }
thead th { background: linear-gradient(#f8fafc, #d4dbe8); }
thead .sel { background: linear-gradient(#f9d99f, #f1c15f); border-color: #e8973c; }
.corner { background: #a9c4e9; }
.corner svg { margin-left: 10px; margin-top: 2px; }
tbody th { background: #e4ecf7; }
td { height: 20px; padding: 0 2px; line-height: 19px; border: solid #d0d7e5; border-width: 0 1px 1px 0; white-space: nowrap; overflow: hidden; }
.r1 td, .r1 th { height: 25px; line-height: 24px; vertical-align: bottom; }
.r1 .title { font-size: 16px; padding-left: 4px; }
.box td:nth-of-type(-n+8) { border-color: #000; }
.box:not(.txt) td:nth-of-type(n+3) { text-align: right; }
.u { border-bottom-color: #000; }
.r { border-right-color: #000; }
.n { text-align: right; }
.tight { padding: 0; }
.mid { text-align: center; }
.flag { background: linear-gradient(135deg, #0a7d12 4px, transparent 4px); }

/* scroll bars */
.vscroll { width: 20px; display: flex; flex-direction: column; border-right: 5px solid #b0cbf2; background: #7596c3; border-left: 1px solid #a9c4e9; }
.vscroll .split { height: 8px; border: 2px solid #6b92bd; background: #fff; }
.vscroll button { height: 17px; display: grid; place-items: center; }
.track { flex: 1; display: flex; }
.vscroll .track { flex-direction: column; }
.thumb { display: grid; place-items: center; border: 1px solid #55688e; border-radius: 2px; }
.vscroll .thumb { height: 68%; background: linear-gradient(90deg, #f0f2f6, #dde4ee 45%, #b9c8dd 50%, #d0daea); }
.vscroll .thumb i { width: 8px; height: 8px; background: repeating-linear-gradient(#6c7683 0 1px, #eef2f7 1px 2px); }

/* sheet tabs */
.sheets { flex: none; height: 17px; display: flex; border-top: 1px solid #86a9d4; border-bottom: 1px solid #5a83bb; background: linear-gradient(#86a9d9, #a0b8de 35%, #9cb5dd); }
.navs { width: 63px; display: flex; align-items: center; justify-content: space-between; padding: 0 6px; border-right: 1px solid #8caad2; background: #c5d9f5; }
.leafs { display: flex; font-size: 12px; line-height: 15px; }
.leaf { width: 63px; margin-right: -10px; padding-right: 1px; background: #5f82b8; clip-path: polygon(10px 0, 100% 0, calc(100% - 10px) 100%, 0 100%); }
.leaf span { height: 100%; display: grid; place-items: center; padding-right: 8px; background: linear-gradient(#dbe8fb, #b6cff2); clip-path: polygon(10px 0, 100% 0, calc(100% - 10px) 100%, 0 100%); }
.leaf.add { width: 44px; }
.leaf.on, .leaf.on span { clip-path: polygon(0 0, 100% 0, calc(100% - 10px) 100%, 0 100%); }
.leaf.on { font-weight: bold; }
.leaf.on span { background: #fff; }
.hscroll { display: flex; width: 557px; margin-left: auto; padding-right: 20px; background: #7596c3; }
.hscroll .split { width: 7px; border: 2px solid #6b92bd; background: #fff; }
.hscroll button { width: 17px; display: grid; place-items: center; }
.hscroll .thumb { width: 81%; background: linear-gradient(#f2f4f7, #d8dfe9 45%, #bfcbdb 50%, #dbe1eb); }
.hscroll .thumb i { width: 8px; height: 7px; background: repeating-linear-gradient(90deg, #6c7683 0 1px, #eef2f7 1px 2px); }

/* status bar */
.status { flex: none; height: 21px; display: flex; justify-content: space-between; line-height: 19px; border-bottom: 1px solid #2b4567; background: linear-gradient(#e3edfb, #c5dbf9 25%, #b3cff5 35%, #d7e6fb); }
.ready { padding: 0 9px 0 7px; border-right: 1px solid #7e9fcb; }
.zoom { display: flex; align-items: center; width: 245px; padding-right: 5px; border-left: 1px solid #6e92c4; background: linear-gradient(#b5d0f7, #8fb3e8 45%, #6d94d0 50%, #9dbdec); }
.views { display: flex; margin: 0 8px 0 5px; border: 1px solid #6688b8; background: #bcd2f0; }
.views button { width: 18px; height: 16px; display: grid; place-items: center; }
.views .on { background: #fbd077; }
.round { margin-left: 8px; }
.slider { flex: 1; display: grid; place-items: center; background: linear-gradient(#e5effc, #e5effc) center / 100% 1px no-repeat, linear-gradient(#4c6893, #4c6893) center / 100% 3px no-repeat; }
.slider + .round { margin: 0; }

/* taskbar */
.taskbar { flex: none; height: 40px; display: flex; align-items: stretch; gap: 3px; background: linear-gradient(100deg, #7f9db9, #9dbbd9 5%, #a9c8e4 12%, #b0cce7 30%, #a3c2df 46%, #b2cfea 52% 62%, #a3c0dc 68%, #b0cee9 73% 79%, #768fa8 83%, #8ba0b6 95%, #70879e); border-top: 1px solid #c9dcec; }
.start { width: 56px; display: grid; place-items: center; }
.app { width: 59px; display: grid; place-items: center; }
.open { border: 1px solid #4d6076; border-radius: 3px; background: linear-gradient(135deg, #e3eef8, #bed4ea); box-shadow: inset 0 0 0 1px #eef6fd; }
.active { background: linear-gradient(#fafdff, #dceaf6); }
.stacked { padding-right: 5px; box-shadow: inset 0 0 0 1px #eef6fd, inset -5px 0 #bed4ea, inset -6px 0 #5f748b; }
.tray { display: flex; align-items: center; gap: 14px; margin-left: auto; color: #fff; }
.icons { display: flex; gap: 8px; }
.lang { align-self: flex-start; line-height: 34px; font-size: 12px; }
.tray time { width: 68px; text-align: center; font-size: 11px; line-height: 17px; }
.desktop { width: 15px; border: 1px solid #50657b; background: linear-gradient(120deg, #c0cfdd, #6f869d 60%); }
```
